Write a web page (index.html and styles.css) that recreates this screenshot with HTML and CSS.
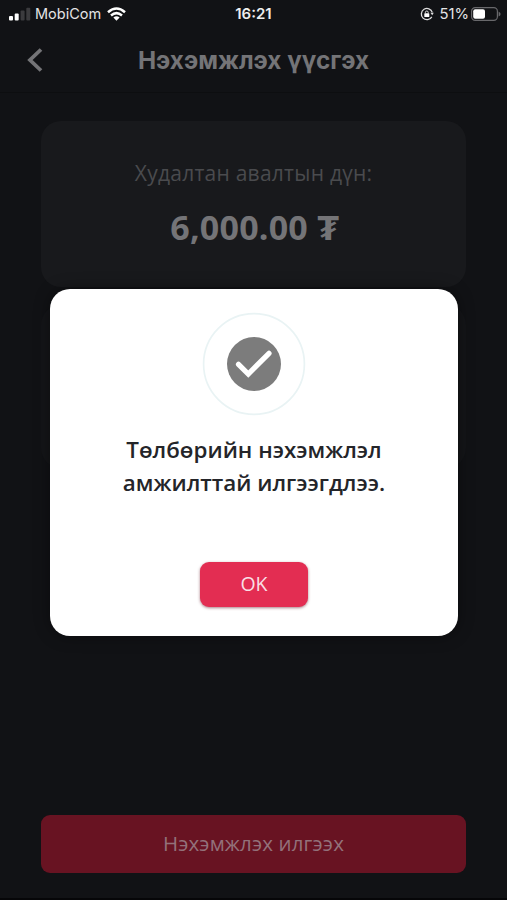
FILE: index.html
```html
<!DOCTYPE html>
<html lang="mn">
<head>
<meta charset="utf-8">
<title>Нэхэмжлэх үүсгэх</title>
<link rel="stylesheet" href="styles.css">
</head>
<body>
<div class="screen">
  <div class="status">
    <div class="status-left">
      <svg class="signal" width="22" height="14" viewBox="0 0 22 14"><rect x="0" y="9" width="4" height="4.5" rx="1" fill="#fff"/><rect x="5.7" y="6.5" width="4" height="7" rx="1" fill="#fff"/><rect x="11.6" y="3.5" width="4" height="10" rx="1" fill="#3b3b3e"/><rect x="17.3" y="0.7" width="4" height="12.8" rx="1" fill="#3b3b3e"/></svg>
      <span class="carrier">MobiCom</span>
      <svg class="wifi" width="19" height="14" viewBox="0 0 19 14" fill="none" stroke="#fff" stroke-width="2.5"><path d="M1 5.2Q9.5-2.3 18 5.2"/><path d="M4 8.5Q9.5 3.8 15 8.5"/><path d="M6.4 10.5Q9.5 7.8 12.6 10.5L9.5 13.7Z" fill="#fff" stroke="none"/></svg>
    </div>
    <span class="time">16:21</span>
    <div class="status-right">
      <svg width="14" height="14" viewBox="0 0 14 14" fill="none" stroke="#ddd" stroke-width="1.3"><path d="M12.3 5.4A5.6 5.6 0 1 0 11.8 9.9"/><path d="M10.4 5.8h3.4l-1.6 2.5z" fill="#ddd" stroke="none"/><rect x="4.3" y="6.3" width="5" height="3.8" rx=".6" fill="#fff" stroke="none"/><path d="M5.4 6.5V5.4a1.4 1.4 0 0 1 2.8 0v1.1" stroke-width="1"/></svg>
      <span class="percent">51%</span>
      <svg class="battery" width="30" height="14" viewBox="0 0 30 14"><rect x=".6" y=".6" width="25.8" height="12.8" rx="3.6" fill="none" stroke="#68686b" stroke-width="1.2"/><rect x="2.2" y="2.2" width="11.8" height="9.6" rx="2" fill="#fff"/><path d="M27.6 4.5q2 1 2 2.5t-2 2.5z" fill="#68686b"/></svg>
    </div>
  </div>
  <header class="header">
    <svg class="back" width="18" height="26" viewBox="0 0 18 26" fill="none" stroke="#747477" stroke-width="3.8"><path d="M15 2.5L4 13l11 10.5"/></svg>
    <h1 class="title">Нэхэмжлэх үүсгэх</h1>
  </header>
  <main class="content">
    <section class="card amount-card">
      <div class="label">Худалтан авалтын дүн:</div>
      <div class="amount">6,000.00 <span class="currency">₮</span></div>
    </section>
    <section class="card detail-card"></section>
    <button class="submit"><span>Нэхэмжлэх илгээх</span></button>
  </main>
  <div class="modal" role="dialog">
    <svg class="check" width="104" height="104" viewBox="0 0 104 104"><circle cx="52" cy="52" r="50.4" fill="#fff" stroke="#e9f3f4" stroke-width="1.7"/><circle cx="52" cy="52" r="27" fill="#7c7c7c"/><path d="M36.5 52.3L46.3 62L67 41.3" fill="none" stroke="#fff" stroke-width="5.2" stroke-linecap="round" stroke-linejoin="miter"/></svg>
    <p class="message"><span>Төлбөрийн нэхэмжлэл</span><br><span>амжилттай илгээгдлээ.</span></p>
    <button class="ok">OK</button>
  </div>
</div>
</body>
</html>
```
FILE: styles.css
```css
* { box-sizing: border-box; }
body { margin: 0; background: #111215; font-family: "Open Sans", "Noto Sans", sans-serif; }
.screen { position: relative; width: 507px; height: 900px; overflow: hidden; display: flex; flex-direction: column; background: #111215; border-bottom: 2px solid #060608; }
.status { height: 27px; display: grid; grid-template-columns: 1fr auto 1fr; align-items: center; padding: 0 6px 0 9px; color: #e4e4e5; font-family: Inter, sans-serif; }
.status-left, .status-right { display: flex; align-items: center; }
.status-right { justify-content: flex-end; }
.carrier { font-size: 14.5px; margin: 0 6px 0 4px; }
.time { margin-right: 3px; font-size: 15px; font-weight: 600; color: #eee; }
.percent { font-size: 14.8px; margin: 0 2px 0 5px; }
.header { height: 66px; display: grid; grid-template-columns: 507px; align-items: center; border-bottom: 1px solid #0d0e10; }
.back, .title { grid-area: 1 / 1; }
.back { margin-left: 26px; }
.title { margin: 0; text-align: center; font: 700 24.3px Inter, sans-serif; color: #747477; }
.content { flex: 1; display: flex; flex-direction: column; padding: 28px 41px 25px; }
.card { background: #18191c; border-radius: 20px; }
.amount-card { height: 166px; display: flex; flex-direction: column; align-items: center; padding-top: 36px; }
.label { font-size: 21px; font-weight: 500; letter-spacing: .25px; line-height: 32px; color: #4a4b4e; }
.amount { margin-top: 19px; font-size: 34px; line-height: 38px; font-weight: 700; letter-spacing: .2px; color: #747477; }
.currency { display: inline-block; transform: scaleX(1.15); transform-origin: left; }
.detail-card { height: 163px; margin-top: 18px; background: #141518; }
.submit { margin-top: auto; height: 58px; padding-bottom: 4px; border: 0; border-radius: 9px; background: #681322; color: #93717a; font: 500 20.5px "Open Sans", sans-serif; letter-spacing: .15px; }
.modal { position: absolute; left: 50px; top: 289px; width: 408px; height: 347px; display: flex; flex-direction: column; align-items: center; padding-top: 23px; background: #fff; border-radius: 20px; box-shadow: 0 0 16px rgba(0, 0, 0, .4); }
.message { margin: 17px 0 0; text-align: center; font-size: 22.4px; line-height: 33px; font-weight: 600; color: #242529; white-space: nowrap; }
.ok { margin-top: 63px; width: 108px; height: 45px; padding-bottom: 3px; border: 0; border-radius: 9px; background: #e32d52; color: #f9dfe5; font: 400 19.5px "Open Sans", sans-serif; box-shadow: 0 1px 3px rgba(100, 20, 35, .55); }
```
